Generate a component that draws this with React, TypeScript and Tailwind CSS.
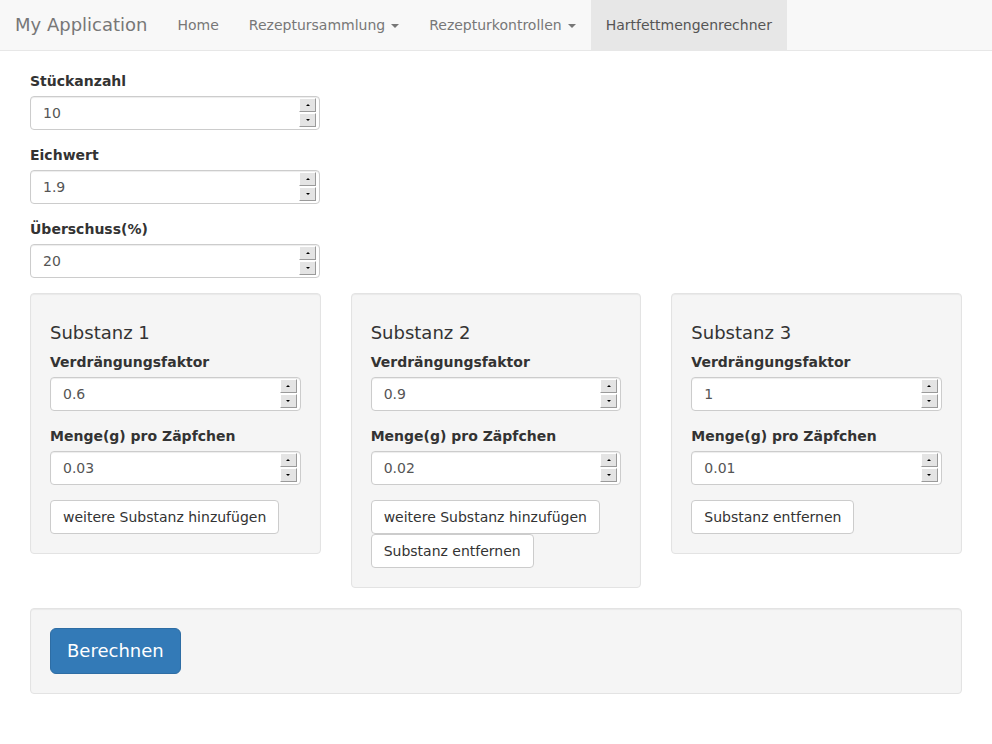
import React from "react";

const FONT = "font-['DejaVu_Sans','Liberation_Sans',sans-serif]";

function Caret() {
  return (
    <span className="ml-[6px] inline-block h-0 w-0 border-x-4 border-t-4 border-x-transparent border-t-[#777] align-middle" />
  );
}

function Spinner() {
  return (
    <div className="absolute right-[4px] top-[2px] flex flex-col gap-[1px]">
      <div className="flex h-[14px] w-[17px] items-center justify-center border border-b-[#9a9a9a] border-l-white border-r-[#9a9a9a] border-t-white bg-[#e4e4e4]">
        <span className="h-0 w-0 border-x-[2px] border-b-[2px] border-x-transparent border-b-black" />
      </div>
      <div className="flex h-[14px] w-[17px] items-center justify-center border border-b-[#9a9a9a] border-l-white border-r-[#9a9a9a] border-t-white bg-[#e4e4e4]">
        <span className="h-0 w-0 border-x-[2px] border-t-[2px] border-x-transparent border-t-black" />
      </div>
    </div>
  );
}

function Field({ label, value }: { label: string; value: string }) {
  return (
    <div className="mb-[15px]">
      <label className="mb-[5px] block text-[14px] font-bold leading-5 text-[#333]">{label}</label>
      <div className="relative">
        <input
          type="text"
          readOnly
          defaultValue={value}
          className="block h-[34px] w-full rounded-[4px] border border-[#ccc] bg-white px-3 text-[14px] leading-5 text-[#555] shadow-[inset_0_1px_1px_rgba(0,0,0,0.075)] outline-none"
        />
        <Spinner />
      </div>
    </div>
  );
}

function Btn({ children }: { children: React.ReactNode }) {
  return (
    <button className="h-[34px] rounded-[4px] border border-[#ccc] bg-white px-3 text-[14px] leading-5 text-[#333]">
      {children}
    </button>
  );
}

const SUBSTANCES = [
  { n: 1, factor: "0.6", amount: "0.03", add: true, remove: false },
  { n: 2, factor: "0.9", amount: "0.02", add: true, remove: true },
  { n: 3, factor: "1", amount: "0.01", add: false, remove: true },
];

export default function App() {
  return (
    <div className={`${FONT} min-h-[744px] bg-white text-[14px] text-[#333]`}>
      {/* Navbar */}
      <nav className="mb-[20px] flex h-[51px] border-b border-[#e7e7e7] bg-[#f8f8f8]">
        <a className="px-[15px] py-[15px] text-[18px] leading-5 text-[#777]">My Application</a>
        <ul className="flex">
          <li className="px-[15px] py-[15px] leading-5 text-[#777]">Home</li>
          <li className="px-[15px] py-[15px] leading-5 text-[#777]">
            Rezeptursammlung
            <Caret />
          </li>
          <li className="px-[15px] py-[15px] leading-5 text-[#777]">
            Rezepturkontrollen
            <Caret />
          </li>
          <li className="bg-[#e7e7e7] px-[15px] py-[15px] leading-5 text-[#555]">Hartfettmengenrechner</li>
        </ul>
      </nav>

      <div className="px-[30px]">
        <div className="w-[290px]">
          <Field label="Stückanzahl" value="10" />
          <Field label="Eichwert" value="1.9" />
          <Field label="Überschuss(%)" value="20" />
        </div>
      </div>

      <div className="grid grid-cols-3 items-start gap-[30px] px-[30px]">
        {SUBSTANCES.map((s) => (
          <div key={s.n} className="mb-[20px] rounded-[4px] border border-[#e3e3e3] bg-[#f5f5f5] p-[19px] shadow-[inset_0_1px_1px_rgba(0,0,0,0.05)]">
            <h4 className="mb-[10px] mt-[10px] text-[18px] font-normal leading-[19px] text-[#333]">Substanz {s.n}</h4>
            <Field label="Verdrängungsfaktor" value={s.factor} />
            <Field label="Menge(g) pro Zäpfchen" value={s.amount} />
            <div className="flex flex-col items-start">
              {s.add && <Btn>weitere Substanz hinzufügen</Btn>}
              {s.remove && <Btn>Substanz entfernen</Btn>}
            </div>
          </div>
        ))}
      </div>

      <div className="mx-[30px] mb-[20px] rounded-[4px] border border-[#e3e3e3] bg-[#f5f5f5] p-[19px] shadow-[inset_0_1px_1px_rgba(0,0,0,0.05)]">
        <button className="h-[46px] rounded-[6px] border border-[#2e6da4] bg-[#337ab7] px-4 text-[18px] leading-6 text-white">
          Berechnen
        </button>
      </div>
    </div>
  );
}
